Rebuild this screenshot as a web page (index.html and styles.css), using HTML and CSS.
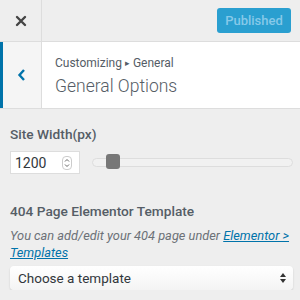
FILE: index.html
```html
<!doctype html>
<html>
<head>
<meta charset="utf-8">
<title>Customizing General</title>
<link rel="stylesheet" href="styles.css">
</head>
<body>
<div class="topbar">
	<div class="close">
		<svg width="12" height="12" viewBox="0 0 12 12"><path d="M2 2L10 10M10 2L2 10" stroke="#444" stroke-width="2.4" stroke-linecap="round"/></svg>
	</div>
	<button class="publish" disabled>Published</button>
</div>
<div class="sechead">
	<div class="back">
		<svg width="10" height="14" viewBox="0 0 10 14"><path d="M7 2L2.5 7L7 12" fill="none" stroke="#0073aa" stroke-width="2.4"/></svg>
	</div>
	<div class="titles">
		<div class="crumb">Customizing <span class="arr">&#9656;</span> General</div>
		<div class="title">General Options</div>
	</div>
</div>
<div class="controls">
	<div class="control">
		<div class="label">Site Width(px)</div>
		<div class="range-row">
			<div class="num">
				<span>1200</span>
				<span class="spin">
					<svg width="8" height="12" viewBox="0 0 8 12"><path d="M2 4.5L4 2.5L6 4.5M2 7.5L4 9.5L6 7.5" fill="none" stroke="#666" stroke-width="1"/></svg>
				</span>
			</div>
			<div class="track"><div class="thumb"></div></div>
		</div>
	</div>
	<div class="control">
		<div class="label">404 Page Elementor Template</div>
		<div class="desc">You can add/edit your 404 page under <a href="#">Elementor &gt; Templates</a></div>
		<div class="select">
			<span>Choose a template</span>
			<svg width="8" height="12" viewBox="0 0 8 12"><path d="M4 1L7 5H1Z M4 11L7 7H1Z" fill="#333"/></svg>
		</div>
	</div>
</div>
</body>
</html>
```

FILE: styles.css
```css
body{margin:0;background:#eee;font-family:Roboto,"Liberation Sans",sans-serif;color:#555d66;}
.topbar{height:41px;border-bottom:1px solid #ddd;display:flex;align-items:flex-start;}
.topbar .close{width:41px;height:41px;border-right:1px solid #ddd;display:flex;align-items:center;justify-content:center;}
.topbar .publish{margin:8px 9px 0 auto;width:74px;height:25px;border:0;border-radius:3px;background:#2a9fd0;color:#86c9e9;font-family:inherit;font-size:13px;font-weight:500;padding:0;}
.sechead{display:flex;background:#fff;border-bottom:1px solid #ddd;height:66px;}
.sechead .back{width:38px;border-left:3px solid #0073aa;border-right:1px solid #ddd;background:#f5f5f5;display:flex;align-items:center;justify-content:center;}
.sechead .titles{padding:13px 0 0 13px;}
.sechead .crumb{font-size:12px;line-height:16px;color:#555d66;}
.sechead .crumb .arr{font-size:9px;vertical-align:1px;}
.sechead .title{font-size:17.5px;font-weight:300;line-height:26px;margin-top:2px;color:#555d66;}
.controls{padding:15px 7px 0 10px;}
.control{margin-bottom:27px;}
.control:last-child{margin-bottom:0;}
.control .label{font-size:13.7px;font-weight:500;line-height:20px;margin-bottom:7px;}
.range-row{display:flex;align-items:center;}
.num{width:68px;height:21px;background:#fff;border:1px solid #ddd;display:flex;align-items:center;justify-content:space-between;font-size:14px;color:#32373c;}
.num span:first-child{padding-left:4px;}
.num .spin{display:flex;align-items:center;justify-content:center;width:8px;height:12px;border:1px solid #ccc;border-radius:4px;margin-right:7px;}
.track{flex:1;margin-left:12px;height:7px;border:1px solid #ddd;border-radius:5px;background:#f1f1f1;position:relative;}
.track .thumb{position:absolute;left:13px;top:-5px;width:14px;height:15px;border-radius:3px;background:#777;}
.desc{font-size:12.8px;font-style:italic;line-height:17px;color:#6c7177;margin-top:-1px;}
.desc a{color:#0073aa;}
.select{margin-top:5px;height:24px;background:linear-gradient(#fff,#f4f4f4);border-radius:4px;box-shadow:0 1px 2px rgba(0,0,0,.15);display:flex;align-items:center;justify-content:space-between;padding:0 6px 0 8px;font-size:13.5px;color:#32373c;}
```
